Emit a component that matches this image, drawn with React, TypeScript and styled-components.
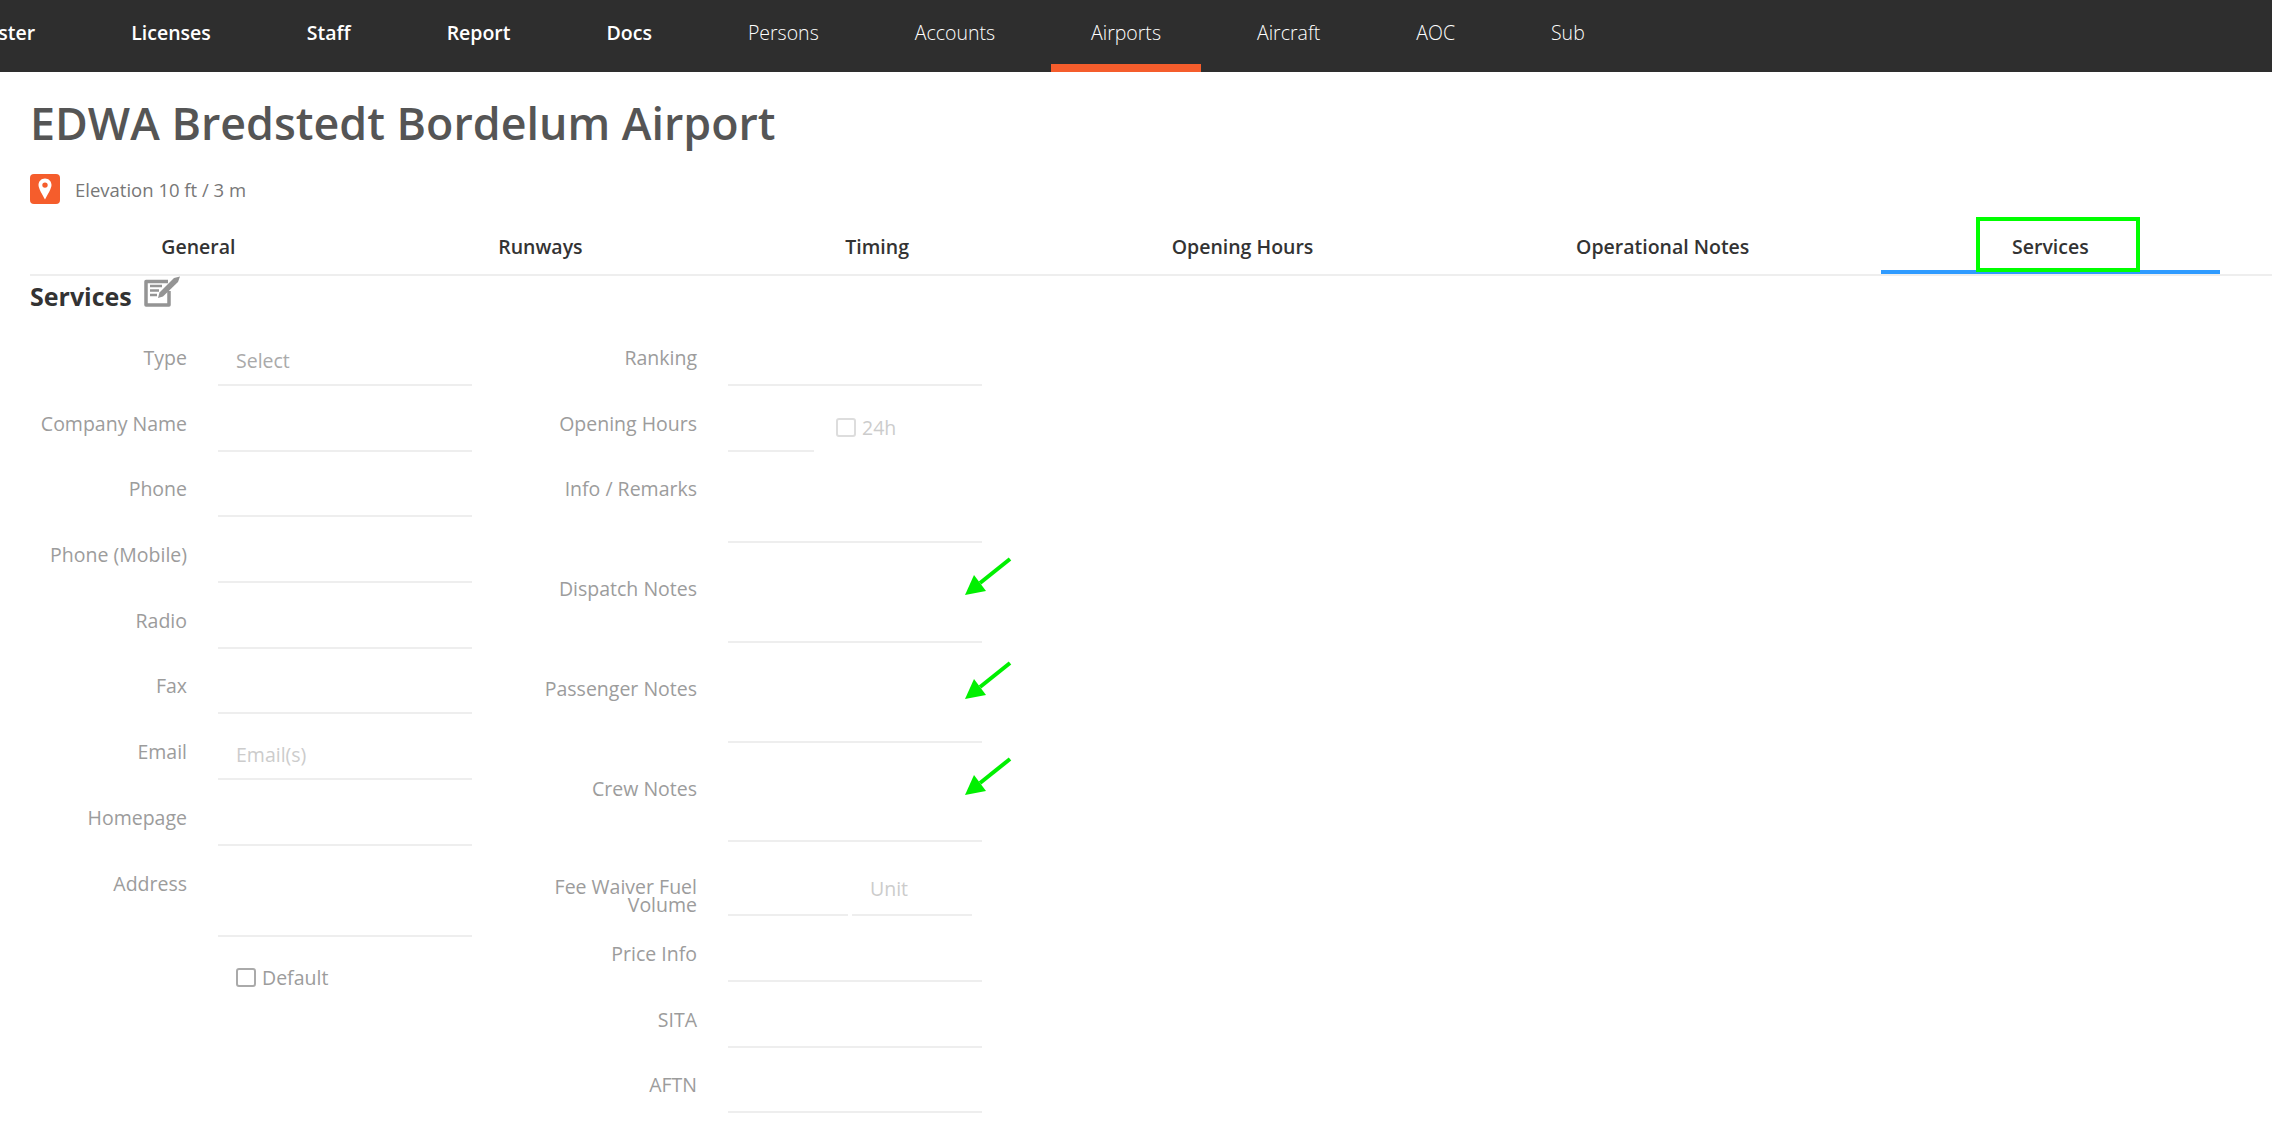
import React from 'react';
import styled, { createGlobalStyle } from 'styled-components';

const GlobalStyle = createGlobalStyle`
  html, body {
    margin: 0;
    padding: 0;
    height: 100%;
    overflow: hidden;
    background: #fff;
    font-family: 'Open Sans', sans-serif;
  }
`;

const TopNav = styled.nav`
  height: 72px;
  background: #2e2e2e;
  display: flex;
  overflow: hidden;
  margin-bottom: 21px;
`;

const NavList = styled.div`
  display: flex;
  margin-left: -74px;
`;

const NavItem = styled.a<{ $strong?: boolean; $active?: boolean }>`
  flex: none;
  height: 72px;
  box-sizing: border-box;
  margin: 0 8px;
  padding: 20px 40px 0;
  font-size: 19.5px;
  line-height: 26px;
  font-weight: ${p => (p.$strong ? 600 : 300)};
  color: #fff;
  border-bottom: 8px solid ${p => (p.$active ? '#f55d2c' : 'transparent')};
`;

const Title = styled.h1`
  margin: 0 0 21px 30px;
  font-size: 44.8px;
  line-height: 60px;
  font-weight: 600;
  color: #555;
`;

const MetaRow = styled.div`
  display: flex;
  align-items: center;
  gap: 15px;
  margin-left: 30px;
  height: 30px;
  margin-bottom: 20px;
  font-size: 18.5px;
  color: #777;
`;

const PinBadge = styled.div`
  width: 30px;
  height: 30px;
  border-radius: 4px;
  background: #f55d2c;
  display: flex;
  align-items: center;
  justify-content: center;
`;

const TabsWrap = styled.div`
  margin-left: 30px;
  border-bottom: 2px solid #eee;
`;

const Tabs = styled.div`
  display: flex;
  width: 2190px;
`;

const Tab = styled.div<{ $active?: boolean }>`
  position: relative;
  flex: 1 1 auto;
  box-sizing: border-box;
  height: 50px;
  text-align: center;
  font-size: 19.5px;
  font-weight: 600;
  line-height: 46px;
  color: #333;
  border-bottom: 4px solid ${p => (p.$active ? '#2f9bff' : 'transparent')};
`;

const GreenBox = styled.div`
  position: absolute;
  left: 95px;
  top: -7px;
  width: 164px;
  height: 55px;
  box-sizing: border-box;
  border: 4px solid #00ff00;
`;

const SectionHead = styled.div`
  display: flex;
  align-items: flex-start;
  gap: 12px;
  height: 31px;
  margin: 0 0 39px 30px;
  font-size: 25px;
  line-height: 40px;
  font-weight: 700;
  color: #333;
`;

const Form = styled.div`
  display: flex;
  gap: 68px;
  margin-left: 30px;
`;

const Column = styled.div`
  width: 442px;
`;

const Row = styled.div`
  display: flex;
  gap: 31px;
  margin-bottom: 25.7px;
`;

const Label = styled.label<{ $offset?: number; $tight?: boolean }>`
  flex: none;
  width: 157px;
  padding-top: ${p => p.$offset ?? 0}px;
  text-align: right;
  font-size: 19.5px;
  line-height: ${p => (p.$tight ? 18 : 24)}px;
  color: #9c9c9c;
`;

const FieldGroup = styled.div`
  display: flex;
  flex: 1;
  gap: 4px;
`;

const Field = styled.div<{ $height?: number; $width?: number }>`
  position: relative;
  box-sizing: border-box;
  flex: ${p => (p.$width ? 'none' : '1')};
  width: ${p => (p.$width ? `${p.$width}px` : 'auto')};
  height: ${p => p.$height ?? 40}px;
  border-bottom: 2px solid #eee;
  padding: 2px 0 0 18px;
  font-size: 19.5px;
  line-height: 26px;
  color: #ccc;
`;

const SelectText = styled.span`
  color: #aaa;
`;

const UnitText = styled.div`
  margin-top: 6px;
`;

const InlineCheck = styled.div<{ $muted?: boolean }>`
  display: flex;
  align-items: center;
  gap: 6px;
  height: 30px;
  font-size: 19.5px;
  color: ${p => (p.$muted ? '#ccc' : '#9c9c9c')};
`;

const CheckBox = styled.span<{ $muted?: boolean }>`
  display: block;
  width: 20px;
  height: 19px;
  box-sizing: border-box;
  border: 2px solid ${p => (p.$muted ? '#ddd' : '#aaa')};
  border-radius: 3px;
`;

const DefaultRow = styled.div`
  margin-left: 206px;
  margin-top: 1px;
`;

const TwentyFour = styled.div`
  margin: 1px 0 0 18px;
`;

const ArrowMark = styled.svg<{ $top: number }>`
  position: absolute;
  left: 234px;
  top: ${p => p.$top}px;
  width: 50px;
  height: 40px;
`;

function Arrow({ top }: { top: number }) {
  return (
    <ArrowMark $top={top} viewBox="0 0 50 40">
      <path d="M48 2 L18 26" stroke="#00f000" strokeWidth="4" fill="none" />
      <polygon points="3,38 12,18 24,34" fill="#00f000" />
    </ArrowMark>
  );
}

const pageNav = ['Licenses', 'Staff', 'Report', 'Docs'];
const dataNav = ['Persons', 'Accounts', 'Airports', 'Aircraft', 'AOC', 'Sub'];
const tabs = ['General', 'Runways', 'Timing', 'Opening Hours', 'Operational Notes', 'Services'];

export default function App() {
  return (
    <>
      <GlobalStyle />
      <TopNav>
        <NavList>
          <NavItem $strong>Roster</NavItem>
          {pageNav.map(item => (
            <NavItem key={item} $strong>
              {item}
            </NavItem>
          ))}
          {dataNav.map(item => (
            <NavItem key={item} $active={item === 'Airports'}>
              {item}
            </NavItem>
          ))}
        </NavList>
      </TopNav>

      <Title>EDWA Bredstedt Bordelum Airport</Title>
      <MetaRow>
        <PinBadge>
          <svg width="14" height="22" viewBox="0 0 14 22">
            <path
              fillRule="evenodd"
              fill="#fff"
              d="M7 0.5 C3.2 0.5 0.5 3.4 0.5 7 C0.5 10.5 4.6 17 7 21.5 C9.4 17 13.5 10.5 13.5 7 C13.5 3.4 10.8 0.5 7 0.5 Z M7 4.4 A2.7 2.7 0 1 1 7 9.8 A2.7 2.7 0 1 1 7 4.4 Z"
            />
          </svg>
        </PinBadge>
        Elevation 10 ft / 3 m
      </MetaRow>

      <TabsWrap>
        <Tabs>
          {tabs.map(tab => (
            <Tab key={tab} $active={tab === 'Services'}>
              {tab}
              {tab === 'Services' && <GreenBox />}
            </Tab>
          ))}
        </Tabs>
      </TabsWrap>

      <SectionHead>
        Services
        <svg width="36" height="31" viewBox="0 0 36 31">
          <path d="M24 5.5 H2 V29 H25 V15" fill="none" stroke="#949494" strokeWidth="3.5" strokeLinejoin="round" />
          <path d="M6 10 H18 M6 14.5 H15 M6 19 H13" stroke="#949494" strokeWidth="2.4" />
          <path d="M14 22 L15.5 16.5 L30 2 L36 0.5 L34 6 L19 20.5 Z" fill="#949494" />
        </svg>
      </SectionHead>

      <Form>
        <Column>
          <Row>
            <Label>Type</Label>
            <Field>
              <SelectText>Select</SelectText>
            </Field>
          </Row>
          <Row>
            <Label>Company Name</Label>
            <Field />
          </Row>
          <Row>
            <Label>Phone</Label>
            <Field />
          </Row>
          <Row>
            <Label>Phone (Mobile)</Label>
            <Field />
          </Row>
          <Row>
            <Label>Radio</Label>
            <Field />
          </Row>
          <Row>
            <Label>Fax</Label>
            <Field />
          </Row>
          <Row>
            <Label>Email</Label>
            <Field>Email(s)</Field>
          </Row>
          <Row>
            <Label>Homepage</Label>
            <Field />
          </Row>
          <Row>
            <Label>Address</Label>
            <Field $height={65} />
          </Row>
          <DefaultRow>
            <InlineCheck>
              <CheckBox />
              Default
            </InlineCheck>
          </DefaultRow>
        </Column>

        <Column>
          <Row>
            <Label>Ranking</Label>
            <Field />
          </Row>
          <Row>
            <Label>Opening Hours</Label>
            <FieldGroup>
              <Field $width={86} />
              <TwentyFour>
                <InlineCheck $muted>
                  <CheckBox $muted />
                  24h
                </InlineCheck>
              </TwentyFour>
            </FieldGroup>
          </Row>
          <Row>
            <Label>Info / Remarks</Label>
            <Field $height={66} />
          </Row>
          <Row>
            <Label $offset={8}>Dispatch Notes</Label>
            <Field $height={74}>
              <Arrow top={-12} />
            </Field>
          </Row>
          <Row>
            <Label $offset={8}>Passenger Notes</Label>
            <Field $height={74}>
              <Arrow top={-8} />
            </Field>
          </Row>
          <Row>
            <Label $offset={9}>Crew Notes</Label>
            <Field $height={74}>
              <Arrow top={-11} />
            </Field>
          </Row>
          <Row>
            <Label $offset={10} $tight>
              Fee Waiver Fuel Volume
            </Label>
            <FieldGroup>
              <Field $height={48} $width={120} />
              <Field $height={48} $width={120}>
                <UnitText>Unit</UnitText>
              </Field>
            </FieldGroup>
          </Row>
          <Row>
            <Label>Price Info</Label>
            <Field />
          </Row>
          <Row>
            <Label>SITA</Label>
            <Field />
          </Row>
          <Row>
            <Label>AFTN</Label>
            <Field />
          </Row>
        </Column>
      </Form>
    </>
  );
}
